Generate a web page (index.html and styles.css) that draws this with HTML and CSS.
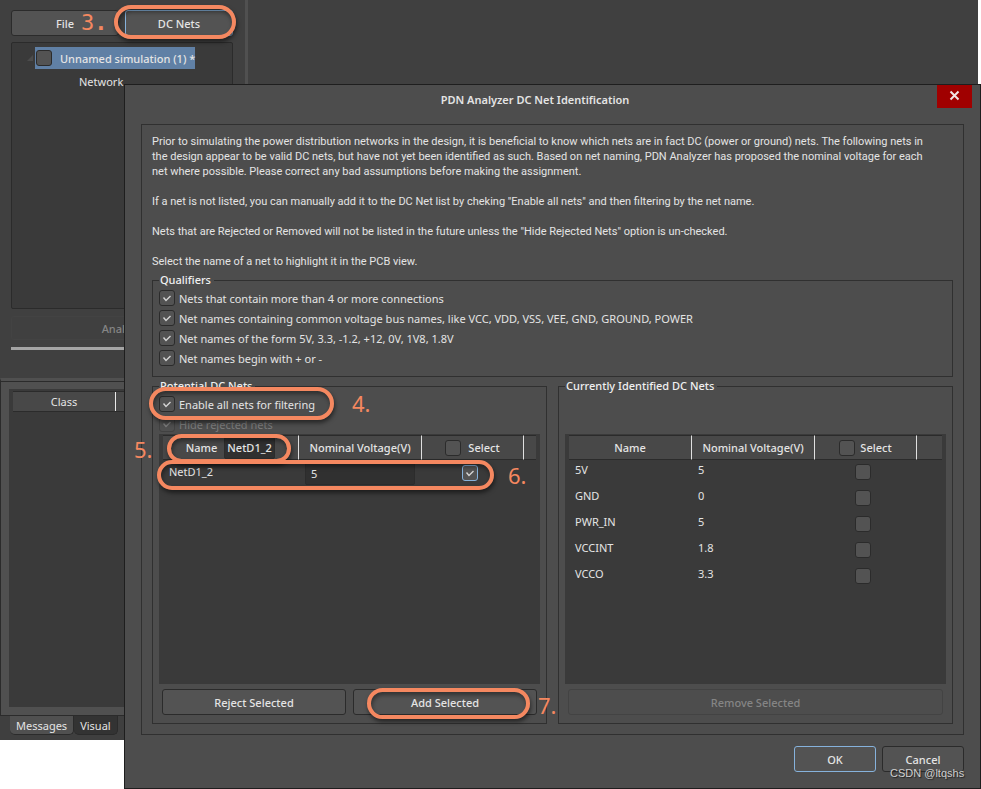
FILE: index.html
```html
<!DOCTYPE html>
<html lang="en">

<head>
    <meta charset="UTF-8">
    <meta name="viewport" content="width=device-width, initial-scale=1.0">
    <title>PDN Analyzer DC Net Identification</title>
    <link rel="stylesheet" href="styles.css">
</head>

<body>
    <div class="workspace">
        <div class="workspace-top">
            <div class="sim-panel">
                <div class="sim-tabs">
                    <button type="button" class="btn">File</button>
                    <button type="button" class="btn btn-focus">DC Nets</button>
                </div>
                <div class="tree">
                    <div class="tree-row">
                        <svg class="tree-arrow" width="8" height="8" viewBox="0 0 8 8"><path d="M7 1v6H1z" fill="#4c4c4c" /></svg>
                        <label class="tree-node"><input type="checkbox" class="check"> <span>Unnamed simulation (1) *</span></label>
                    </div>
                    <div class="tree-child">Network</div>
                </div>
                <button type="button" class="btn analyze" disabled>Analyze</button>
                <div class="progress"></div>
            </div>
        </div>
        <div class="messages">
            <div class="messages-list">
                <div class="messages-head"><span>Class</span></div>
            </div>
        </div>
        <div class="tabs">
            <button type="button" class="tab current">Messages</button>
            <button type="button" class="tab">Visual</button>
        </div>
    </div>

    <div class="dialog">
        <div class="dialog-title">
            <h1>PDN Analyzer DC Net Identification</h1>
            <button type="button" class="close" aria-label="Close">
                <svg width="11" height="11" viewBox="0 0 11 11"><path d="M1.5 1.5l8 8M9.5 1.5l-8 8" stroke="#f2e4e4" stroke-width="2" /></svg>
            </button>
        </div>

        <div class="dialog-main">
            <div class="intro">
                <p>Prior to simulating the power distribution networks in the design, it is beneficial to know which nets are in fact DC (power or ground) nets. The following nets in<br>
                    the design appear to be valid DC nets, but have not yet been identified as such. Based on net naming, PDN Analyzer has proposed the nominal voltage for each<br>
                    net where possible. Please correct any bad assumptions before making the assignment.</p>
                <p>If a net is not listed, you can manually add it to the DC Net list by cheking "Enable all nets" and then filtering by the net name.</p>
                <p>Nets that are Rejected or Removed will not be listed in the future unless the "Hide Rejected Nets" option is un-checked.</p>
                <p>Select the name of a net to highlight it in the PCB view.</p>
            </div>

            <fieldset class="group">
                <legend>Qualifiers</legend>
                <label class="option"><input type="checkbox" class="check" checked> Nets that contain more than 4 or more connections</label>
                <label class="option"><input type="checkbox" class="check" checked> Net names containing common voltage bus names, like VCC, VDD, VSS, VEE, GND, GROUND, POWER</label>
                <label class="option"><input type="checkbox" class="check" checked> Net names of the form 5V, 3.3, -1.2, +12, 0V, 1V8, 1.8V</label>
                <label class="option"><input type="checkbox" class="check" checked> Net names begin with + or -</label>
            </fieldset>

            <div class="groups">
                <fieldset class="group">
                    <legend>Potential DC Nets</legend>
                    <label class="option"><input type="checkbox" class="check" checked> Enable all nets for filtering</label>
                    <label class="option option-disabled"><input type="checkbox" class="check" checked disabled> Hide rejected nets</label>
                    <div class="net-list">
                        <table class="nets nets-potential">
                            <thead>
                                <tr>
                                    <th class="col-name"><label class="head">Name <input type="text" class="field filter" value="NetD1_2"></label></th>
                                    <th class="col-volt">Nominal Voltage(V)</th>
                                    <th class="col-select"><label class="head"><input type="checkbox" class="check"> Select</label></th>
                                    <th></th>
                                </tr>
                            </thead>
                            <tbody>
                                <tr>
                                    <td>NetD1_2</td>
                                    <td><input type="text" class="field voltage" value="5" aria-label="Nominal voltage of NetD1_2"></td>
                                    <td><input type="checkbox" class="check check-focus" checked aria-label="Select NetD1_2"></td>
                                    <td></td>
                                </tr>
                            </tbody>
                        </table>
                    </div>
                    <div class="group-buttons">
                        <button type="button" class="btn">Reject Selected</button>
                        <button type="button" class="btn">Add Selected</button>
                    </div>
                </fieldset>

                <fieldset class="group">
                    <legend>Currently Identified DC Nets</legend>
                    <div class="net-list">
                        <table class="nets">
                            <thead>
                                <tr>
                                    <th class="col-volt">Name</th>
                                    <th class="col-volt">Nominal Voltage(V)</th>
                                    <th class="col-select"><label class="head"><input type="checkbox" class="check"> Select</label></th>
                                    <th></th>
                                </tr>
                            </thead>
                            <tbody>
                                <tr><td>5V</td><td>5</td><td><input type="checkbox" class="check" aria-label="Select 5V"></td><td></td></tr>
                                <tr><td>GND</td><td>0</td><td><input type="checkbox" class="check" aria-label="Select GND"></td><td></td></tr>
                                <tr><td>PWR_IN</td><td>5</td><td><input type="checkbox" class="check" aria-label="Select PWR_IN"></td><td></td></tr>
                                <tr><td>VCCINT</td><td>1.8</td><td><input type="checkbox" class="check" aria-label="Select VCCINT"></td><td></td></tr>
                                <tr><td>VCCO</td><td>3.3</td><td><input type="checkbox" class="check" aria-label="Select VCCO"></td><td></td></tr>
                            </tbody>
                        </table>
                    </div>
                    <div class="group-buttons">
                        <button type="button" class="btn" disabled>Remove Selected</button>
                    </div>
                </fieldset>
            </div>
        </div>

        <div class="dialog-footer">
            <button type="button" class="btn btn-focus">OK</button>
            <button type="button" class="btn">Cancel</button>
        </div>
    </div>

    <!-- step markers -->
    <div class="ring ring-3"></div>
    <div class="ring ring-4"></div>
    <div class="ring ring-5"></div>
    <div class="ring ring-6"></div>
    <div class="ring ring-7"></div>
    <span class="step step-3">3<b>.</b></span>
    <span class="step step-4">4.</span>
    <span class="step step-5">5.</span>
    <span class="step step-6">6.</span>
    <span class="step step-7">7.</span>
    <span class="watermark">CSDN @ltqshs</span>
</body>

</html>
```
FILE: styles.css
```css
* {
    margin: 0;
    padding: 0;
    box-sizing: border-box;
}

body {
    position: relative;
    min-height: 100vh;
    background-color: #fff;
    color: #e4e4e4;
    font: 11px/15px "Noto Sans", "Open Sans", sans-serif;
}

button,
input {
    font: inherit;
    color: inherit;
}

/* buttons and fields */
.btn {
    height: 26px;
    border: 1px solid #2b2b2b;
    border-radius: 3px;
    background-color: #535353;
    font-weight: 500;
}

.btn-focus {
    border-color: #86b2dc;
}

.btn:disabled {
    border-color: #434343;
    background-color: transparent;
    color: #858585;
}

.check {
    appearance: none;
    flex: none;
    display: block;
    width: 16px;
    height: 16px;
    border: 1px solid #2b2b2b;
    border-radius: 3px;
    background-color: #535353;
}

.check:checked {
    background-image: url("data:image/svg+xml,%3Csvg xmlns='http://www.w3.org/2000/svg' viewBox='0 0 14 14'%3E%3Cpath d='M3.5 6.5l2.5 3 4.5-4.5' fill='none' stroke='%23d4d4d4' stroke-width='1.4'/%3E%3C/svg%3E");
}

.check:disabled {
    opacity: .35;
}

.check-focus {
    border-color: #86b2dc;
}

.field {
    border: 1px solid #2c2c2c;
    border-radius: 2px;
    background-color: #303030;
}

/* main window */
.workspace {
    width: calc(100% - 3px);
    background-color: #404040;
}

.workspace-top {
    height: 378px;
}

.sim-panel {
    display: flex;
    flex-direction: column;
    gap: 7px;
    width: 248px;
    height: 378px;
    padding: 10px 12px 0 11px;
    border-right: 3px solid #505050;
}

.sim-tabs {
    display: flex;
    gap: 6px;
    margin-bottom: -1px;
}

.sim-tabs .btn {
    flex: 1;
}

.analyze {
    height: 24px;
}

.tree {
    height: 267px;
    padding: 4px 0 0 14px;
    border: 1px solid #2b2b2b;
    border-radius: 2px;
    background-color: #3a3a3a;
}

.tree-row {
    display: flex;
    align-items: center;
    gap: 1px;
}

.tree-node {
    display: flex;
    align-items: center;
    gap: 8px;
    height: 22px;
    padding-left: 1px;
    background-color: #6080a5;
    font-weight: 500;
}

.tree-child {
    padding: 5px 0 0 53px;
}

.progress {
    height: 3px;
    background-color: #a4a4a4;
}

.messages {
    height: 338px;
    padding: 8px;
    border: 1px solid #2b2b2b;
    border-width: 1px 0 1px 1px;
    border-top: 3px solid #505050;
    background-color: #505050;
    box-shadow: inset 0 1px #2b2b2b;
}

.messages-list {
    height: 318px;
    padding: 2px 4px;
    background-color: #3a3a3a;
}

.messages-head {
    height: 21px;
    border: 1px solid #2b2b2b;
    border-width: 1px 0;
    background-color: #484848;
}

.messages-head span {
    display: block;
    width: 103px;
    border-right: 1px solid #e8e8e8;
    line-height: 19px;
    text-align: center;
}

.tabs {
    display: flex;
    height: 24px;
    padding-left: 10px;
    background-color: #3f3f3f;
}

.tab {
    height: 19px;
    padding: 0 6px;
    border: 1px solid #2b2b2b;
    border-top: 0;
    border-left: 0;
    border-radius: 0 0 5px 5px;
    background-color: #333;
}

.tab.current {
    background-color: #505050;
}

/* dialog */
.dialog {
    position: absolute;
    top: 84px;
    left: 124px;
    right: 0;
    padding: 0 16px;
    border: 1px solid #1e1e1e;
    background-color: #4d4d4d;
}

.dialog-title {
    display: flex;
    height: 39px;
    margin-right: -8px;
}

.dialog-title h1 {
    flex: 1;
    padding-right: 8px;
    font-size: 11px;
    font-weight: 600;
    line-height: 29px;
    text-align: center;
}

.close {
    width: 35px;
    height: 23px;
    border: 0;
    background-color: #a00000;
}

.dialog-main {
    padding: 9px 10px 10px;
    border: 1px solid #303030;
}

.intro {
    display: grid;
    gap: 15px;
    margin-bottom: 4px;
    font-family: Roboto, "Open Sans", sans-serif;
    white-space: nowrap;
}

.group {
    display: flex;
    flex-direction: column;
    min-width: 0;
    padding: 1px 6px 8px;
    border: 1px solid #303030;
}

.group legend {
    padding: 0 3px 0 1px;
    color: #f0f0f0;
    font-weight: 500;
    line-height: 14px;
}

.option {
    display: flex;
    align-items: center;
    gap: 4px;
    height: 20px;
}

.option-disabled {
    color: #7c7c7c;
}

.groups {
    display: grid;
    grid-template-columns: 1fr 1fr;
    gap: 11px;
    margin-top: 2px;
}

.groups .group {
    justify-content: flex-end;
}

.net-list {
    height: 250px;
    padding: 1px 4px;
    background-color: #3a3a3a;
}

.nets {
    width: 100%;
    border-collapse: separate;
    border-spacing: 0;
    table-layout: fixed;
}

.nets th {
    height: 25px;
    border: 1px solid #2b2b2b;
    border-width: 1px 0;
    background-color: #484848;
    font-weight: 500;
}

.nets th:not(:last-child) {
    border-right: 1px solid #e0e0e0;
}

.col-name {
    width: 136px;
}

.col-volt {
    width: 123px;
}

.col-select {
    width: 102px;
}

.nets td {
    height: 26px;
    padding: 0 6px;
    line-height: 20px;
    vertical-align: top;
}

.nets td .check {
    margin: 4px auto 0;
}

.nets td:nth-child(3) {
    padding-right: 12px;
}

.nets-potential td {
    line-height: 24px;
}

.nets-potential td .check {
    margin-top: 5px;
}

.head {
    display: flex;
    align-items: center;
    justify-content: center;
    gap: 5px;
}

.nets-potential .head {
    gap: 7px;
}

.filter {
    width: 51px;
    height: 22px;
    padding-left: 2px;
}

.voltage {
    display: block;
    width: 110px;
    height: 23px;
    margin-top: 2px;
    padding-left: 5px;
}

.group-buttons {
    display: flex;
    gap: 7px;
    margin: 5px 3px 0;
}

.group-buttons .btn {
    flex: 1;
}

.dialog-footer {
    display: flex;
    justify-content: flex-end;
    gap: 6px;
    padding: 11px 0 16px;
}

.dialog-footer .btn {
    width: 82px;
}

/* step markers */
.ring {
    position: absolute;
    border: 4px solid #f58860;
    border-radius: 18px;
    box-shadow: 1px 3px 4px rgba(0, 0, 0, .5), inset 1px 3px 4px rgba(0, 0, 0, .4);
    pointer-events: none;
}

.ring-3 {
    top: 5px;
    left: 114px;
    width: 122px;
    height: 34px;
}

.ring-4 {
    top: 387px;
    left: 149px;
    width: 185px;
    height: 33px;
}

.ring-5 {
    top: 434px;
    left: 167px;
    width: 124px;
    height: 29px;
}

.ring-6 {
    top: 460px;
    left: 157px;
    width: 337px;
    height: 30px;
}

.ring-7 {
    top: 688px;
    left: 367px;
    width: 163px;
    height: 31px;
}

.step {
    position: absolute;
    color: #f58860;
    font: 22px/26px "Noto Sans", sans-serif;
}

.step-3 {
    top: 10px;
    left: 81px;
    font-family: "DejaVu Sans Mono", monospace;
}

.step-4 {
    top: 390px;
    left: 352px;
}

.step-5 {
    top: 436px;
    left: 134px;
}

.step-6 {
    top: 462px;
    left: 508px;
}

.step-7 {
    top: 692px;
    left: 538px;
}

.watermark {
    position: absolute;
    top: 766px;
    left: 890px;
    color: #d0d0d0;
    font: 11px/15px "Liberation Sans", Arial, sans-serif;
    text-shadow: 1px 1px 1px #222;
}
```
